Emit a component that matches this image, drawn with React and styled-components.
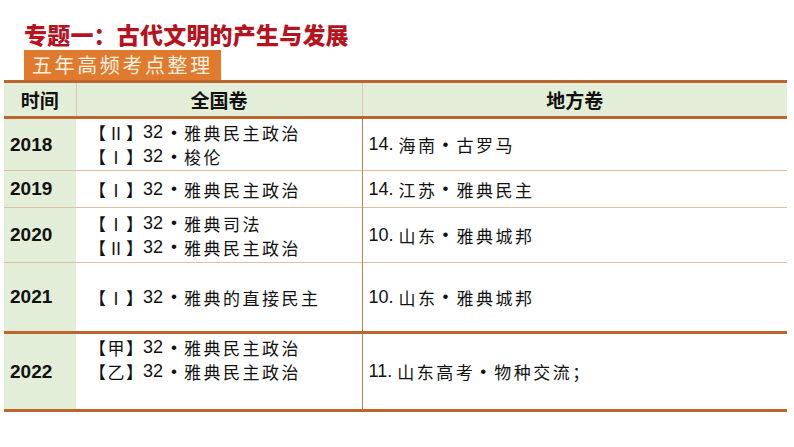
import React from 'react';
import styled, { createGlobalStyle } from 'styled-components';

const GlobalStyle = createGlobalStyle`
  body {
    margin: 0;
    background: #ffffff;
    font-family: "Liberation Sans", "Noto Sans CJK SC", sans-serif;
  }
`;

const Page = styled.div`
  width: 794px;
  height: 447px;
  padding: 20px 7px 0 4px;
  box-sizing: border-box;
  display: flex;
  flex-direction: column;
`;

const Title = styled.h1`
  margin: 0 0 0 20px;
  font-family: "Noto Sans CJK SC", sans-serif;
  font-size: 23px;
  font-weight: 900;
  line-height: 28px;
  color: #b5141f;
  letter-spacing: 0.2px;
`;

const Tag = styled.div`
  align-self: flex-start;
  margin: 2px 0 0 20px;
  padding: 0 8px;
  height: 30px;
  background: #e07a2e;
  color: #fdf1e0;
  font-family: "Noto Sans CJK SC", serif;
  font-size: 20px;
  line-height: 30px;
  letter-spacing: 2.6px;
`;

const Table = styled.table`
  width: 783px;
  border-collapse: collapse;
  table-layout: fixed;
  border-top: 3px solid #bd652c;
`;

const Row = styled.tr`
  height: ${({ h }) => h}px;
  border-bottom: ${({ thick }) => (thick ? '3px solid #bd652c' : '1px solid #dcbfa3')};
`;

const HeadCell = styled.th`
  background: #e3eed8;
  font-family: "Noto Sans CJK SC", sans-serif;
  font-size: 19px;
  font-weight: 700;
  color: #111;
  text-align: center;
  padding: 0;
  border-left: ${({ line }) => (line ? '1px solid #d8c9b4' : 'none')};
`;

const YearCell = styled.td`
  background: #e3eed8;
  font-family: "Liberation Sans", sans-serif;
  font-weight: 700;
  font-size: 19px;
  color: #111;
  padding: 0 0 0 6px;
`;

const PaperCell = styled.td`
  padding: 0 0 0 ${({ pad }) => pad}px;
  vertical-align: middle;
  border-left: ${({ line }) => (line ? '1px solid #b98556' : 'none')};
`;

const Line = styled.div`
  height: 24px;
  display: flex;
  align-items: center;
  white-space: nowrap;
  color: #111;
`;

const Bracket = styled.span`
  font-family: "Noto Sans CJK SC", sans-serif;
  font-size: 17px;
  width: 54px;
  display: inline-flex;
  justify-content: space-between;
  align-items: center;
`;

const Num = styled.span`
  font-family: "Liberation Sans", sans-serif;
  font-size: 18px;
`;

const Dot = styled.span`
  font-family: "Liberation Sans", sans-serif;
  font-size: 17px;
  margin: 0 ${({ r }) => r}px 0 ${({ l }) => l}px;
`;

const Words = styled.span`
  font-family: "Noto Sans CJK SC", sans-serif;
  font-size: 17px;
  letter-spacing: 2.5px;
  margin-left: ${({ gap }) => gap || 0}px;
`;

const rows = [
  {
    year: '2018', h: 53,
    national: [['Ⅱ', '雅典民主政治'], ['Ⅰ', '梭伦']],
    local: ['14.', '海南', '古罗马'],
  },
  {
    year: '2019', h: 37,
    national: [['Ⅰ', '雅典民主政治']],
    local: ['14.', '江苏', '雅典民主'],
  },
  {
    year: '2020', h: 55,
    national: [['Ⅰ', '雅典司法'], ['Ⅱ', '雅典民主政治']],
    local: ['10.', '山东', '雅典城邦'],
  },
  {
    year: '2021', h: 70, thick: true,
    national: [['Ⅰ', '雅典的直接民主']],
    local: ['10.', '山东', '雅典城邦'],
  },
  {
    year: '2022', h: 78, thick: true,
    national: [['甲', '雅典民主政治'], ['乙', '雅典民主政治'], null],
    local: ['11.', '山东高考', '物种交流；'],
  },
];

function NationalLine ({ item }) {
  if (!item) return <Line />;
  return (
    <Line>
      <Bracket><span>【</span><span>{item[0]}</span><span>】</span></Bracket>
      <Num>32</Num>
      <Dot l={8} r={7}>•</Dot>
      <Words>{item[1]}</Words>
    </Line>
  );
}

export default function App () {
  return (
    <Page>
      <GlobalStyle />
      <Title>专题一：古代文明的产生与发展</Title>
      <Tag>五年高频考点整理</Tag>
      <Table>
        <colgroup>
          <col style={{ width: 72 }} />
          <col style={{ width: 286 }} />
          <col style={{ width: 425 }} />
        </colgroup>
        <thead>
          <Row h={36} thick>
            <HeadCell>时间</HeadCell>
            <HeadCell line>全国卷</HeadCell>
            <HeadCell line>地方卷</HeadCell>
          </Row>
        </thead>
        <tbody>
          {rows.map(r => (
            <Row key={r.year} h={r.h} thick={r.thick}>
              <YearCell>{r.year}</YearCell>
              <PaperCell pad={13}>
                {r.national.map((n, i) => <NationalLine key={i} item={n} />)}
              </PaperCell>
              <PaperCell pad={6} line>
                <Line>
                  <Num>{r.local[0]}</Num>
                  <Words gap={5}>{r.local[1]}</Words>
                  <Dot l={5} r={8}>•</Dot>
                  <Words>{r.local[2]}</Words>
                </Line>
              </PaperCell>
            </Row>
          ))}
        </tbody>
      </Table>
    </Page>
  );
}
